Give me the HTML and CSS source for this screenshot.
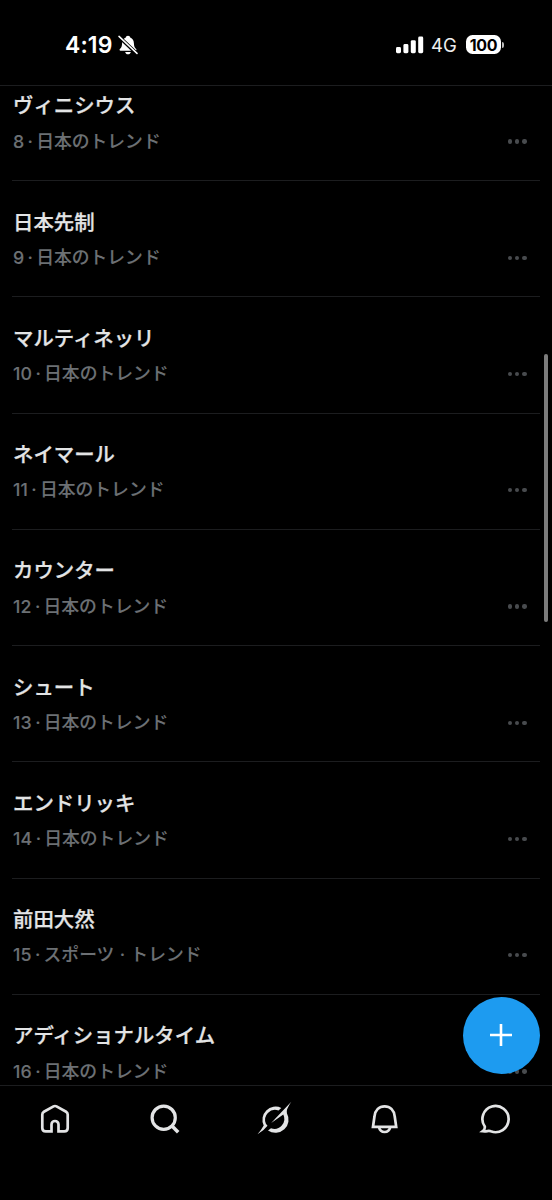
FILE: index.html
```
<!DOCTYPE html>
<html lang="ja">
<head>
<meta charset="utf-8">
<title>トレンド</title>
<link rel="stylesheet" href="styles.css">
</head>
<body>
<div class="phone">
  <header class="status">
    <div class="status-left">
      <span class="time">4:19</span>
      <svg class="mute" viewBox="0 0 20 20"><path d="M10 .8c1.300 0 2 .8 2.200 1.800 2.500 1 3.600 3 3.700 5.700.1 3.200.8 4.600 2.200 5.800.7.7.4 1.700-.6 1.700h-15c-1 0-1.300-1-.6-1.700 1.400-1.200 2.100-2.600 2.200-5.800.1-2.700 1.200-4.700 3.700-5.700C8 1.600 8.700.8 10 .8zM7.200 16.900h5.600c-.3 1.500-1.400 2.300-2.800 2.300s-2.500-.8-2.800-2.300z" fill="#fff"/><path d="M.8 1.600l18 17" stroke="#000" stroke-width="3.600"/><path d="M1 1.400l18 17" stroke="#fff" stroke-width="1.500" stroke-linecap="round"/></svg>
    </div>
    <div class="status-right">
      <svg class="signal" viewBox="0 0 28 18"><g fill="#fff"><rect x="0" y="11" width="5" height="6.200" rx="1.400"/><rect x="7.400" y="8" width="5" height="9.200" rx="1.400"/><rect x="14.800" y="4.200" width="5" height="13" rx="1.400"/><rect x="22.200" y=".5" width="5" height="16.700" rx="1.400"/></g></svg>
      <span class="network">4G</span>
      <span class="battery">100</span>
      <span class="battery-tip"></span>
    </div>
  </header>
  <main class="feed">
    <article class="trend"><h2>ヴィニシウス</h2><p><span>8</span><i>·</i><span>日本のトレンド</span></p><div class="more"><b></b><b></b><b></b></div></article>
    <article class="trend"><h2>日本先制</h2><p><span>9</span><i>·</i><span>日本のトレンド</span></p><div class="more"><b></b><b></b><b></b></div></article>
    <article class="trend"><h2>マルティネッリ</h2><p><span>10</span><i>·</i><span>日本のトレンド</span></p><div class="more"><b></b><b></b><b></b></div></article>
    <article class="trend"><h2>ネイマール</h2><p><span>11</span><i>·</i><span>日本のトレンド</span></p><div class="more"><b></b><b></b><b></b></div></article>
    <article class="trend"><h2>カウンター</h2><p><span>12</span><i>·</i><span>日本のトレンド</span></p><div class="more"><b></b><b></b><b></b></div></article>
    <article class="trend"><h2>シュート</h2><p><span>13</span><i>·</i><span>日本のトレンド</span></p><div class="more"><b></b><b></b><b></b></div></article>
    <article class="trend"><h2>エンドリッキ</h2><p><span>14</span><i>·</i><span>日本のトレンド</span></p><div class="more"><b></b><b></b><b></b></div></article>
    <article class="trend"><h2>前田大然</h2><p><span>15</span><i>·</i><span>スポーツ</span><i class="wide">·</i><span>トレンド</span></p><div class="more"><b></b><b></b><b></b></div></article>
    <article class="trend"><h2>アディショナルタイム</h2><p><span>16</span><i>·</i><span>日本のトレンド</span></p><div class="more"><b></b><b></b><b></b></div></article>
  </main>
  <nav class="tabs">
    <svg viewBox="0 0 36 36"><path d="M16.500 5.400L6.900 10.700Q5.300 11.600 5.300 13.500V27Q5.300 30.400 8.700 30.400H14.500V23.500a3.500 3.500 0 0 1 7 0V30.400H27.300Q30.700 30.400 30.700 27V13.500Q30.700 11.600 29.100 10.700L19.500 5.400Q18 4.600 16.500 5.400z"/></svg>
    <svg viewBox="0 0 36 36"><circle cx="16.700" cy="16.700" r="11.600" stroke-width="3.200"/><path d="M25 25l6.200 6.300" stroke-width="3.500"/></svg>
    <svg viewBox="0 0 36 36"><g class="solid"><path d="M24.300 6.900A13.200 13.200 0 0 0 6.700 24.500Q4.600 28.500.5 33.300Q7 29.400 10.500 24.700L8.900 22.800A10 10 0 0 1 21.500 9.500z"/><path d="M34.300.8Q25 10.600 14.200 22L26.300 13.500A10 10 0 0 1 14 27.300L11 29.600A13.200 13.200 0 0 0 29.900 12.200Q28.800 8.700 34.300.8z"/></g></svg>
    <svg viewBox="0 0 36 36"><path d="M6 25.800L7.500 15.300C8.200 9 12.100 5.300 17.600 5.300S27 9 27.700 15.300L29.200 25.800z"/><path d="M11.900 26c.8 3.400 2.900 5 5.700 5s4.900-1.600 5.700-5"/></svg>
    <svg viewBox="0 0 36 36"><path d="M5.800 30.200C7.500 29 8 27.600 7.800 25.600A13.100 13.100 0 1 1 13.800 30.300C11.500 29.200 10.200 30.700 5.800 30.200z"/></svg>
  </nav>
  <button class="compose" aria-label="作成"><svg viewBox="0 0 24 24"><path d="M12 1v22M1 12h22"/></svg></button>
  <div class="scrollbar"></div>
</div>
</body>
</html>
```
FILE: styles.css
```
* { box-sizing: border-box; }
body { margin: 0; background: #000; }
.phone {
  position: relative;
  display: flex;
  flex-direction: column;
  width: 552px;
  height: 1200px;
  overflow: hidden;
  background: #000;
  color: #e3e4e5;
  font-family: Inter, "Noto Sans CJK JP", sans-serif;
}
.status {
  flex: none;
  height: 86px;
  padding: 4px 48px 0 65px;
  display: flex;
  align-items: center;
  justify-content: space-between;
  border-bottom: 1px solid #1c1d1f;
  color: #fff;
}
.status-left, .status-right { display: flex; align-items: center; }
.time { font-size: 23px; font-weight: 600; line-height: 28px; letter-spacing: 0.1px; }
.mute { width: 20px; height: 20px; margin-left: 5px; }
.signal { width: 28px; height: 18px; }
.network { margin-left: 7px; width: 27px; font-size: 18.5px; line-height: 24px; color: #eee; }
.battery {
  margin-left: 8px;
  width: 35px;
  height: 19px;
  border-radius: 6.5px;
  background: #fff;
  color: #000;
  font-size: 16px;
  font-weight: 700;
  line-height: 20px;
  text-align: center;
  letter-spacing: -0.3px;
}
.battery-tip { width: 2px; height: 6px; margin-left: 1px; border-radius: 0 3px 3px 0; background: #bbb; }
.feed { flex: none; height: 999px; overflow: hidden; }
.trend {
  display: grid;
  grid-template-columns: 1fr auto;
  grid-template-rows: 30px 26px;
  row-gap: 7.2px;
  height: 116.25px;
  margin: 0 12px;
  padding: 26.6px 13.5px 0 1px;
  border-bottom: 1px solid #1c1d1f;
}
.trend:first-child { margin-top: -21.2px; }
.trend h2 {
  grid-column: 1 / -1;
  margin: 0;
  font-size: 20.4px;
  line-height: 30px;
  font-weight: 500;
  -webkit-text-stroke: 0.25px currentColor;
}
.trend p {
  display: flex;
  margin: 0;
  font-size: 17.8px;
  line-height: 26px;
  font-weight: 500;
  color: #6c7074;
  -webkit-text-stroke: 0.12px currentColor;
}
.trend p span:first-child { letter-spacing: 0.2px; }
.trend i { width: 11.8px; text-align: center; font-style: normal; }
.trend i.wide { width: 16px; }
.more { display: flex; align-items: center; gap: 3px; }
.more b { width: 4.300px; height: 4.300px; border-radius: 50%; background: #484b4e; }
.tabs {
  flex: 1;
  display: flex;
  justify-content: space-around;
  padding: 15px 2px 0 0;
  border-top: 1px solid #1c1d1f;
}
.tabs svg { width: 36px; height: 36px; fill: none; stroke: #e3e4e5; stroke-width: 2.700; }
.tabs .solid { fill: #e3e4e5; stroke: none; }
.compose {
  position: absolute;
  left: 462.5px;
  top: 996.5px;
  width: 77px;
  height: 77px;
  padding: 0;
  border: 0;
  border-radius: 50%;
  background: #1d9bf0;
  display: flex;
  align-items: center;
  justify-content: center;
}
.compose svg { width: 24px; height: 24px; stroke: #fff; stroke-width: 2.600; }
.scrollbar {
  position: absolute;
  left: 543.5px;
  top: 353.5px;
  width: 4px;
  height: 268px;
  border-radius: 2px;
  background: #7c7c7c;
}
```
